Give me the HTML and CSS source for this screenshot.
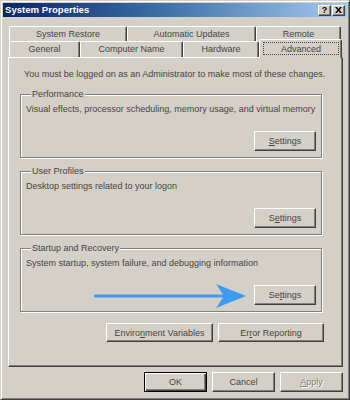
FILE: index.html
```html
<!DOCTYPE html>
<html lang="en">
<head>
    <meta charset="UTF-8">
    <title>System Properties</title>
    <link rel="stylesheet" href="styles.css">
</head>
<body>
    <div class="window">
        <div class="titlebar">
            <span class="title">System Properties</span>
            <div class="caption-buttons">
                <span class="cbtn">?</span>
                <span class="cbtn">
                    <svg width="7" height="6" viewBox="0 0 7 6"><path d="M0 0h2l1.5 2 1.5-2h2l-2.5 3 2.5 3h-2l-1.5-2-1.5 2h-2l2.5-3z" fill="#000"/></svg>
                </span>
            </div>
        </div>

        <div class="tabs">
            <div class="tab-row back">
                <div class="tab restore">System Restore</div>
                <div class="tab updates">Automatic Updates</div>
                <div class="tab remote">Remote</div>
            </div>
            <div class="tab-row front">
                <div class="tab general">General</div>
                <div class="tab computer">Computer Name</div>
                <div class="tab hardware">Hardware</div>
                <div class="tab advanced active"><span class="focus">Advanced</span></div>
            </div>
        </div>

        <div class="panel">
            <p class="intro">You must be logged on as an Administrator to make most of these changes.</p>

            <fieldset class="group">
                <legend>Performance</legend>
                <p class="desc">Visual effects, processor scheduling, memory usage, and virtual memory</p>
                <div class="group-actions">
                    <button class="btn settings"><u>S</u>ettings</button>
                </div>
            </fieldset>

            <fieldset class="group">
                <legend>User Profiles</legend>
                <p class="desc">Desktop settings related to your logon</p>
                <div class="group-actions">
                    <button class="btn settings">S<u>e</u>ttings</button>
                </div>
            </fieldset>

            <fieldset class="group">
                <legend>Startup and Recovery</legend>
                <p class="desc">System startup, system failure, and debugging information</p>
                <div class="group-actions">
                    <button class="btn settings">Se<u>t</u>tings</button>
                </div>
            </fieldset>

            <div class="panel-actions">
                <button class="btn env">Enviro<u>n</u>ment Variables</button>
                <button class="btn err">Er<u>r</u>or Reporting</button>
            </div>
        </div>

        <div class="footer">
            <button class="btn dlg default">OK</button>
            <button class="btn dlg">Cancel</button>
            <button class="btn dlg disabled"><u>A</u>pply</button>
        </div>

        <!-- annotation arrow drawn over the dialog -->
        <svg class="arrow" width="156" height="26" viewBox="0 0 156 26">
            <line x1="0" y1="13" x2="130" y2="13" stroke="#3d9cf2" stroke-width="3"/>
            <polygon points="122,1 152,13 122,25 130,13" fill="#3d9cf2"/>
        </svg>
    </div>
</body>
</html>
```

FILE: styles.css
```css
* {
    margin: 0;
    padding: 0;
    box-sizing: border-box;
}

body {
    font-family: "Liberation Sans", Arial, sans-serif;
    font-size: 9px;
    color: #444;
    background: #d4d0c8;
}

.window {
    position: relative;
    width: 350px;
    height: 400px;
    background: #d4d0c8;
    border: 1px solid;
    border-color: #d4d0c8 #404040 #404040 #d4d0c8;
    box-shadow: inset 1px 1px #fff, inset -1px -1px #808080;
    padding: 2px;
}

/* title bar */
.titlebar {
    height: 14px;
    display: flex;
    align-items: center;
    justify-content: space-between;
    padding: 0 2px 0 2px;
    background: linear-gradient(to right, #0a246a 0%, #3a6ea5 45%, #a6caf0 100%);
}

.title {
    color: #fff;
    font-weight: bold;
    font-size: 9.6px;
    line-height: 14px;
}

.caption-buttons {
    display: flex;
    gap: 1px;
}

.cbtn {
    width: 13px;
    height: 11px;
    display: flex;
    align-items: center;
    justify-content: center;
    background: #d4d0c8;
    border: 1px solid;
    border-color: #fff #404040 #404040 #fff;
    box-shadow: inset -1px -1px #808080;
    color: #000;
    font-weight: bold;
    font-size: 9px;
    line-height: 9px;
}

/* tabs */
.tabs {
    margin: 9px 0 0 6px;
}

.tab-row {
    display: flex;
}

.tab {
    background: #d4d0c8;
    border: 1px solid;
    border-bottom: none;
    border-color: #fff #404040 #fff #fff;
    border-radius: 2px 2px 0 0;
    box-shadow: inset -1px 0 #808080;
    text-align: center;
    color: #444;
}

.back .tab {
    height: 15px;
    line-height: 14px;
}

.front .tab {
    height: 16px;
    line-height: 15px;
}

.restore { width: 118px; }
.updates { width: 129px; }
.remote { width: 85px; }
.general { width: 71px; }
.computer { width: 103px; }
.hardware { width: 76px; }

.advanced {
    width: 83px;
}

.tab.active {
    position: relative;
    z-index: 2;
    height: 19px;
    margin-top: -2px;
    margin-bottom: -1px;
    padding: 2px 2px 0 3px;
    line-height: 12px;
}

.focus {
    display: block;
    height: 13px;
    border: 1px dotted #444;
}

/* main panel */
.panel {
    position: relative;
    z-index: 1;
    width: 335px;
    height: 310px;
    margin-left: 5px;
    border: 1px solid;
    border-color: #fff #404040 #404040 #fff;
    box-shadow: inset -1px -1px #808080;
    padding: 10px 0 0 11px;
}

.intro {
    line-height: 12px;
    margin-left: 4px;
}

.group {
    width: 302px;
    margin-top: 9px;
    border: 1px solid #808080;
    box-shadow: 1px 1px #fff, inset 1px 1px #fff;
    padding: 0 5px 6px 5px;
}

.group + .group {
    margin-top: 8px;
}

.group legend {
    margin-left: 5px;
    padding: 0 1px;
    line-height: 10px;
    background: #d4d0c8;
}

.desc {
    margin-top: 4px;
    line-height: 12px;
}

.group-actions {
    display: flex;
    justify-content: flex-end;
    margin-top: 16px;
}

.btn {
    font-family: inherit;
    font-size: 9px;
    color: #444;
    height: 20px;
    background: #d4d0c8;
    border: 1px solid;
    border-color: #fff #404040 #404040 #fff;
    box-shadow: inset -1px -1px #808080;
}

.settings {
    width: 62px;
}

.panel-actions {
    display: flex;
    justify-content: flex-end;
    gap: 5px;
    width: 304px;
    margin-top: 11px;
}

.env { width: 107px; height: 19px; }
.err { width: 106px; height: 19px; }

/* dialog buttons */
.footer {
    display: flex;
    justify-content: flex-end;
    gap: 5px;
    margin: 5px 4px 0 0;
}

.dlg {
    width: 63px;
}

.default {
    border: 1px solid #000;
    box-shadow: inset 1px 1px #fff, inset -1px -1px #404040, inset -2px -2px #808080;
}

.disabled {
    color: #808080;
    text-shadow: 1px 1px #fff;
}

.arrow {
    position: absolute;
    left: 93px;
    top: 282px;
    z-index: 3;
}
```
